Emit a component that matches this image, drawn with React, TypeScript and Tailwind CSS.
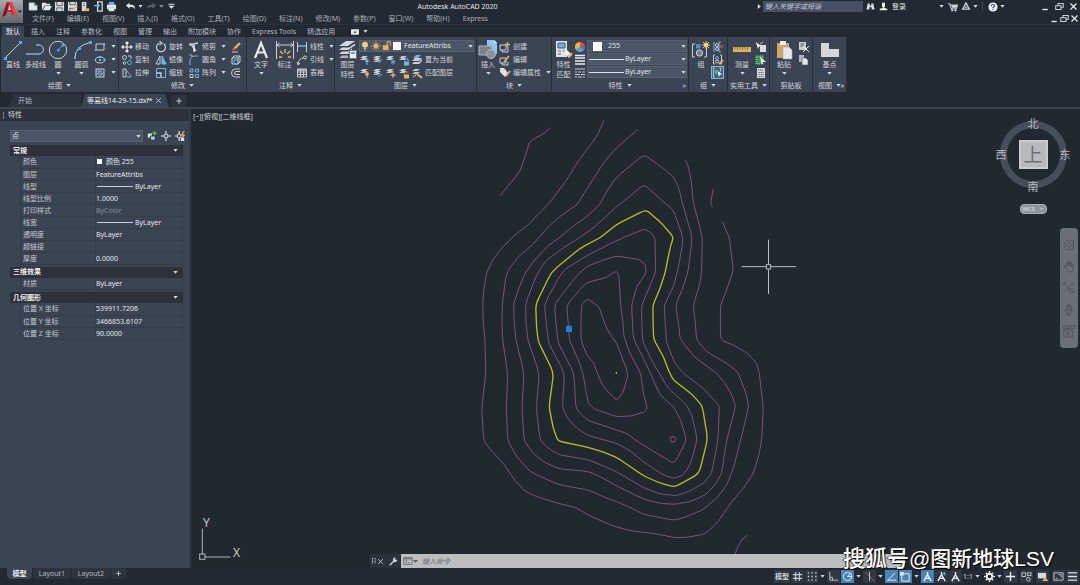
import { ReactNode } from 'react';

type Point = [number, number];

interface IconProps {
  children: ReactNode;
  className?: string;
  box?: number;
}

const Icon = ({ children, className = 'size-3', box = 12 }: IconProps) => (
  <svg
    viewBox={`0 0 ${box} ${box}`}
    className={`shrink-0 ${className}`}
    fill="none"
    stroke="#c9ced6"
    strokeWidth={1}
    aria-hidden="true"
  >
    {children}
  </svg>
);

const Caret = ({ className = '' }: { className?: string }) => (
  <svg viewBox="0 0 5 3" className={`h-[3px] w-[5px] shrink-0 ${className}`} aria-hidden="true">
    <path d="M0.3 0H4.7L2.5 2.8Z" fill="#d3d7dd" />
  </svg>
);

/* ---------- shared drawings ---------- */

const BLUE = '#6fb7e8';
const GOLD = '#e8b45a';

const Sheets = () => (
  <path d="M1 4L4 2H9L6 4ZM1 6L4 4H9L6 6Z" fill="#c9ced6" stroke="none" />
);

const layerIcons: ReactNode[] = [
  <><Sheets /><circle cx="8" cy="7" r="1.8" fill={BLUE} stroke="none" /><path d="M8 9V11" stroke={BLUE} /></>,
  <><Sheets /><path d="M1 8L4 6H9L6 8Z" fill="#aeb4bd" stroke="none" /><path d="M7 9L10 5" stroke={BLUE} /></>,
  <><Sheets /><path d="M8 5.5V10.5M5.5 8H10.5M6.3 6.3L9.7 9.7M9.7 6.3L6.3 9.7" stroke={BLUE} strokeWidth=".8" /></>,
  <><Sheets /><rect x="6" y="7.5" width="5" height="4" fill={BLUE} stroke="none" /><path d="M7 7.5V6A1.5 1.5 0 0 1 10 6V7.5" stroke={BLUE} /></>,
  <><path d="M2 4L5 1H10L7 4Z" fill={BLUE} stroke="none" /><path d="M1 7L4 4H11L8 7ZM1 10L3 8H8L11 5V7L8 10Z" fill="#c9ced6" stroke="none" /></>,
];

const layerIconsOn: ReactNode[] = [
  <><Sheets /><circle cx="8" cy="7" r="2" fill={GOLD} stroke="none" /><path d="M8 9V11" stroke={GOLD} /></>,
  <><Sheets /><path d="M1 8L4 6H9L6 8Z" fill="#aeb4bd" stroke="none" /><path d="M6 10L10 7" stroke={BLUE} /></>,
  <><Sheets /><circle cx="8" cy="8" r="1.5" fill={GOLD} stroke="none" /><path d="M8 5V11M5 8H11" stroke={GOLD} strokeWidth=".8" /></>,
  <><Sheets /><rect x="6" y="7.5" width="5" height="4" fill={GOLD} stroke="none" /><path d="M6 7V6A1.5 1.5 0 0 1 9 6" stroke={GOLD} /></>,
  <><path d="M1 4L4 2H9L6 4ZM1 7L4 5H9L6 7Z" fill="#c9ced6" stroke="none" /><path d="M6 7L11 11" stroke={GOLD} strokeWidth="2" /><path d="M2 10L5 8" /></>,
];

/* ---------- ribbon building blocks ---------- */

interface PanelProps {
  title: string;
  width: string;
  children: ReactNode;
  caret?: boolean;
  launcher?: boolean;
}

const Panel = ({ title, width, children, caret = true, launcher = false }: PanelProps) => (
  <section className={`flex h-[55px] shrink-0 flex-col border-r border-[#272e39] bg-[#3b4453] ${width}`}>
    <div className="flex h-[42px] pt-[3px]">{children}</div>
    <div className="relative flex h-[13px] items-center justify-center gap-1 text-[#d3d7dd]">
      <span>{title}</span>
      {caret && <Caret />}
      {launcher && <span className="absolute right-[2px] text-[7px]">»</span>}
    </div>
  </section>
);

interface BigButtonProps {
  label: string;
  label2?: string;
  width: string;
  caret?: boolean;
  children: ReactNode;
}

const BigButton = ({ label, label2, width, caret = false, children }: BigButtonProps) => (
  <button className={`flex shrink-0 flex-col items-center whitespace-nowrap leading-[10px] ${width}`}>
    <Icon box={20} className="size-5">{children}</Icon>
    <span>{label}</span>
    {label2 && <span>{label2}</span>}
    {caret && <Caret className="mt-[2px]" />}
  </button>
);

interface ToolProps {
  icon: ReactNode;
  label?: string;
  caret?: boolean;
}

const Tool = ({ icon, label, caret }: ToolProps) => (
  <button className="flex h-[13px] items-center gap-[2px] whitespace-nowrap" aria-label={label ?? 'tool'}>
    <Icon>{icon}</Icon>
    {label && <span>{label}</span>}
    {caret && <Caret className="ml-[3px]" />}
  </button>
);

const ToolColumn = ({ tools, width = '' }: { tools: ToolProps[]; width?: string }) => (
  <div className={`flex shrink-0 flex-col ${width}`}>
    {tools.map((tool, i) => (
      <Tool key={i} {...tool} />
    ))}
  </div>
);

const LineCombo = ({ label }: { label: string }) => (
  <div className="relative h-3">
    <select
      aria-label={label}
      className="h-3 w-[100px] appearance-none border border-[#566172] bg-[#4a5565] pl-[37px] leading-[10px] text-[#e3e6ea]"
    >
      <option>ByLayer</option>
    </select>
    <span className="pointer-events-none absolute left-[2px] top-[6px] h-px w-[35px] bg-[#dfe3e8]" />
    <Caret className="pointer-events-none absolute right-[1px] top-[5px]" />
  </div>
);

/* ---------- title and menus ---------- */

const menus = [
  '文件(F)', '编辑(E)', '视图(V)', '插入(I)', '格式(O)', '工具(T)', '绘图(D)',
  '标注(N)', '修改(M)', '参数(P)', '窗口(W)', '帮助(H)', 'Express',
];

const ribbonTabs = [
  '默认', '插入', '注释', '参数化', '视图', '管理', '输出', '附加模块', '协作', 'Express Tools', '精选应用',
];

const quickIcons: [string, ReactNode][] = [
  ['新建', <path d="M1 2H7L10 5V10H1ZM7 2V5H10" fill="#e6e8eb" stroke="#a9afb9" strokeWidth=".6" />],
  ['打开', <path d="M1 10V2H5L6 3H10V5H4ZM2 10L4.5 5.5H12L9.5 10Z" fill="#e6e8eb" stroke="none" />],
  ['保存', <><path d="M1 1H11V11H1Z" fill="#d7dade" stroke="none" /><path d="M3 1V5H9V1M3 11V7.5H9V11" stroke="#555d69" /></>],
  ['另存为', <><path d="M1 1H11V11H1Z" fill="#d7dade" stroke="none" /><path d="M3 1V4H9V1M3 11V8H7" stroke="#555d69" /><path d="M6 10L11 5" stroke={GOLD} strokeWidth="2" /></>],
  ['从移动设备打开', <><path d="M2 1H7V11H2Z" fill="#d7dade" stroke="none" /><path d="M3.5 3H5.5M3.5 5H5.5" stroke="#555d69" /><path d="M5 8H10V11H5Z" fill={GOLD} stroke="none" /></>],
  ['保存到移动设备', <><path d="M5 1H10V11H5Z" stroke="#d7dade" strokeWidth="1.4" /><path d="M1 5H7M5 3L7 5L5 7" stroke={BLUE} strokeWidth="1.4" /></>],
  ['打印', <><path d="M3 1H9V4H3Z" fill={BLUE} stroke="none" /><path d="M1 4H11V9H1Z" fill="#e6e8eb" stroke="none" /><path d="M3 7.5H9V11H3Z" fill="#fff" stroke="#68a4cc" strokeWidth=".6" /></>],
];

const Restore = () => (
  <Icon className="size-[9px]"><path d="M1 5H8V10H1ZM4 5V2H11V7H8" strokeWidth="1.4" /></Icon>
);
const Close = () => (
  <Icon className="size-[9px]"><path d="M2 2L10 10M10 2L2 10" stroke="#eceef1" strokeWidth="1.6" /></Icon>
);
const Minimize = () => (
  <Icon className="size-[9px]"><path d="M2 10H9" stroke="#eceef1" strokeWidth="1.8" /></Icon>
);

const Header = () => (
  <header className="flex h-[25px] border-b border-[#2b323d]">
    <button aria-label="应用程序菜单" className="flex h-[23px] w-[23px] shrink-0 items-center bg-gradient-to-b from-[#a6a9ae] to-[#62666d]">
      <svg viewBox="0 0 23 23" className="size-[23px]" aria-hidden="true">
        <path d="M2 17L7 2H12L17 16L12 15L11 12H7L6 15Z" fill="#c5282c" />
        <path d="M2 17L7 2L8 7L6 15Z" fill="#8e1418" />
        <path d="M8 10L9.5 5L11 10Z" fill="#dcdcdc" />
        <path d="M7 2H12L17 16L14 15L10 3Z" fill="#e3494b" />
        <path d="M17.500 10.500H22L19.750 13Z" fill="#252b34" />
      </svg>
    </button>
    <div className="flex min-w-0 flex-1 flex-col">
      <div className="flex h-[13px] items-center justify-between pt-px">
        <div className="flex items-center">
          <div className="flex items-center gap-[2px] pl-[5px]">
            {quickIcons.map(([name, icon]) => (
              <button key={name} aria-label={name}><Icon className="size-[11px]">{icon}</Icon></button>
            ))}
          </div>
          <button aria-label="放弃" className="ml-2"><Icon className="size-[11px]"><path d="M1 5L5 2V4H7Q11 4 11 9Q9 6 7 6.500H5V8.500Z" fill="#dfe2e6" stroke="none" /></Icon></button>
          <Caret className="ml-[2px]" />
          <button aria-label="重做" className="ml-[3px]"><Icon className="size-[11px]"><path d="M11 5L7 2V4H5Q1 4 1 9Q3 6 5 6.500H7V8.500Z" fill="#545d6b" stroke="none" /></Icon></button>
          <Caret className="ml-[2px] opacity-60" />
          <Icon className="ml-[3px] size-[9px]"><path d="M2 3H10" strokeWidth="1.500" /><path d="M2 5H10L6 9Z" fill="#dfe2e6" stroke="none" /></Icon>
        </div>
        <h1 className="whitespace-nowrap text-[#e3e6ea]">Autodesk AutoCAD 2020</h1>
        <div className="flex items-center pl-[18px]">
          <Icon className="mr-px size-[5px]"><path d="M2 0L9 6L2 12Z" fill="#dfe2e6" stroke="none" /></Icon>
          <input
            aria-label="搜索"
            placeholder="键入关键字或短语"
            className="h-[11px] w-[100px] bg-[#465062] pl-[2px] italic leading-[11px] placeholder:text-[#c3c8d0]"
          />
          <Icon className="ml-[3px] size-[9px]"><path d="M2 2H5V5H7V2H10V4L11.500 10H7.500V7H4.500V10H.5L2 4Z" fill="#dfe2e6" stroke="none" /></Icon>
          <Icon className="ml-[4px] size-[9px]"><path d="M4 1H8V6L7 7V8L11 9V11H1V9L5 8V7L4 6Z" fill="#f0f1f3" stroke="none" /></Icon>
          <button className="ml-[4px] whitespace-nowrap text-[#e3e6ea]">登录</button>
          <Caret className="ml-[33px]" />
          <Icon className="ml-[4px] size-[10px]"><path d="M0 2H2L4 8H10L11.500 3.500H3" strokeWidth="1.300" /><path d="M4 4H11L10 7H5Z" fill="#dfe2e6" stroke="none" /><circle cx="5" cy="10" r="1" fill="#dfe2e6" /><circle cx="9" cy="10" r="1" fill="#dfe2e6" /></Icon>
          <Icon className="ml-[3px] size-[10px]"><path d="M6 1L10 8.500H2ZM1 8.500H4M8 8.500H11M4.500 6H7.500" strokeWidth="1.500" /></Icon>
          <Caret className="ml-[2px]" />
          <span className="ml-[4px] h-[9px] w-px bg-[#424a57]" />
          <Icon className="ml-[5px] size-[10px]"><circle cx="6" cy="6" r="5.500" fill="#f0f1f3" stroke="none" /><path d="M4 5Q4 3 6 3Q8 3 8 4.500Q8 5.500 6 6.500V7.500M6 8.500V9.500" stroke="#2b4a73" strokeWidth="1.300" /></Icon>
          <Caret className="ml-[2px]" />
          <div className="ml-[36px] mr-[2px] flex gap-[5px]">
            <button aria-label="最小化"><Minimize /></button>
            <button aria-label="还原"><Restore /></button>
            <button aria-label="关闭"><Close /></button>
          </div>
        </div>
      </div>
      <nav className="flex h-[12px] items-center gap-[13px] whitespace-nowrap pl-[9px] pt-px text-[#a9afb9]">
        {menus.map((menu) => (
          <button key={menu}>{menu}</button>
        ))}
        <div className="ml-auto flex gap-px pr-px">
          <button aria-label="最小化图形"><Minimize /></button>
          <button aria-label="还原图形"><Restore /></button>
          <button aria-label="关闭图形"><Close /></button>
        </div>
      </nav>
    </div>
  </header>
);

const RibbonTabs = () => (
  <nav className="flex h-[12px] items-center gap-[11px] whitespace-nowrap pl-[6px] pt-px text-[#b4bac3]">
    {ribbonTabs.map((tab, i) => (
      <button key={tab} className={i === 0 ? '-mx-1 h-full bg-[#3b4453] px-1 text-[#eceef1]' : ''}>
        {tab}
      </button>
    ))}
    <button aria-label="显示" className="ml-[5px] flex items-center gap-1">
      <Icon className="size-2"><rect x="0" y="2" width="12" height="8" rx="1" fill="#e3e6ea" stroke="none" /><path d="M4 7L6 4.500L8 7Z" fill="#222933" stroke="none" /></Icon>
      <Caret />
    </button>
  </nav>
);

/* ---------- ribbon ---------- */

const Ribbon = () => (
  <div className="flex h-[55px] overflow-hidden pl-px text-[#d3d7dd]">
    <Panel title="绘图" width="w-[118px]">
      <span className="w-px" />
      <BigButton label="直线" width="w-[22px]">
        <path d="M2 18L18 2" /><path d="M1 17H4V20H1ZM16 1H19V4H16Z" fill="#5aa7e0" stroke="none" />
      </BigButton>
      <BigButton label="多段线" width="w-[23px]">
        <path d="M1 14H13A4.500 4.500 0 0 0 13 5H10" /><path d="M0 13H2V15H0ZM11 13H13V15H11ZM11 4H13V6H11Z" fill="#5aa7e0" stroke="none" />
      </BigButton>
      <BigButton label="圆" width="w-[22px]" caret>
        <circle cx="10" cy="10" r="8.700" /><path d="M10 10L14.500 5.500" stroke="#5aa7e0" /><path d="M9 9H11.500V11.500H9ZM13.500 4H16V6.500H13.500Z" fill="#5aa7e0" stroke="none" />
      </BigButton>
      <BigButton label="圆弧" width="w-[25px]" caret>
        <path d="M3 18Q3 6 18 2.500" /><path d="M2 16H4V19H2ZM6 7H9V10H6ZM17 1H20V4H17Z" fill="#5aa7e0" stroke="none" />
      </BigButton>
      <ToolColumn
        tools={[
          { icon: <><path d="M2 3H10V9H2Z" /><path d="M1 8H3V10H1ZM9 2H11V4H9Z" fill={BLUE} stroke="none" /></>, caret: true },
          { icon: <><ellipse cx="6" cy="6" rx="4.500" ry="3" /><path d="M5 5H7V7H5ZM9.500 5H11.500V7H9.500ZM5 2H7V4H5Z" fill={BLUE} stroke="none" /></>, caret: true },
          { icon: <><rect x="2" y="2" width="8" height="8" /><path d="M4 4H8V8H4Z" fill={BLUE} fillOpacity=".5" stroke={BLUE} strokeWidth=".6" /><path d="M2 5L5 2M5 10L10 5M8 10L10 8M2 8L8 2" strokeWidth=".6" /></>, caret: true },
        ]}
      />
    </Panel>

    <Panel title="修改" width="w-[128px]">
      <span className="w-[2px]" />
      <ToolColumn
        width="w-[34px]"
        tools={[
          { icon: <path d="M6 1V11M1 6H11M4.500 2.500L6 1L7.500 2.500M4.500 9.500L6 11L7.500 9.500M2.500 4.500L1 6L2.500 7.500M9.500 4.500L11 6L9.500 7.500" stroke="#eceef1" strokeWidth="1.200" />, label: '移动' },
          { icon: <><circle cx="3.500" cy="3.500" r="2" /><circle cx="8.500" cy="8.500" r="2" stroke={BLUE} /><circle cx="3.500" cy="9" r="1.300" /><path d="M7 2H10V5" /></>, label: '复制' },
          { icon: <><path d="M2 2H5V10H2Z" /><path d="M5 3L10 9V10H6" stroke={BLUE} /></>, label: '拉伸' },
        ]}
      />
      <ToolColumn
        width="w-[33px]"
        tools={[
          { icon: <path d="M8.500 2.500A4.500 4.500 0 1 1 4.500 2M4.500 0L7 2.200L4.500 4" strokeWidth="1.200" />, label: '旋转' },
          { icon: <><path d="M5 2V10H1Z" /><path d="M7 2V10H11Z" fill={BLUE} stroke={BLUE} /></>, label: '镜像' },
          { icon: <><path d="M1.500 1.500H10.500V10.500H1.500Z" stroke={BLUE} /><path d="M1.500 6H6V10.500" strokeWidth="1.400" /></>, label: '缩放' },
        ]}
      />
      <ToolColumn
        width="w-[42px]"
        tools={[
          { icon: <><path d="M2 2L8 10M1 4L10 2" strokeWidth="1.500" /><path d="M6 4V11" stroke="#eceef1" strokeWidth="1.500" /></>, label: '修剪', caret: true },
          { icon: <><path d="M2 11V7Q2 2 7 2H10" stroke={BLUE} /><path d="M1 1H4V3" strokeWidth=".7" /></>, label: '圆角', caret: true },
          { icon: <><path d="M2 2H5V5H2ZM7.500 2H10.500V5H7.500ZM7.500 7.500H10.500V10.500H7.500Z" stroke={BLUE} /><path d="M2 7.500H5V10.500H2Z" /></>, label: '阵列', caret: true },
        ]}
      />
      <ToolColumn
        tools={[
          { icon: <><path d="M4 8L10 2" stroke={GOLD} strokeWidth="2.400" /><path d="M3 9L5 7" stroke="#e05a4a" strokeWidth="2.400" /><path d="M2 11H8" /></> },
          { icon: <><path d="M2 4H8V10H2ZM2 4L4 2H10V8L8 10M8 4L10 2" /><path d="M4 6H8V10H4Z" stroke={BLUE} /></> },
          { icon: <path d="M10 2H5.500A4 4 0 0 0 5.500 10H10M10 4.500H6A1.500 1.500 0 0 0 6 7.500H10" /> },
        ]}
      />
    </Panel>

    <Panel title="注释" width="w-[88px]">
      <span className="w-[2px]" />
      <BigButton label="文字" width="w-[24px]" caret>
        <path d="M4 18L10 3L16 18M6 12.500H14" stroke="#e6e8eb" strokeWidth="2.200" />
      </BigButton>
      <BigButton label="标注" width="w-[23px]">
        <path d="M1.500 1V19M18.500 1V19M2 5H18M4.500 3L2 5L4.500 7M15.500 3L18 5L15.500 7" />
        <path d="M10 9V13M5 11L8 14M15 11L12 14M4 17H7M13 17H16" stroke={GOLD} strokeWidth="1.400" />
      </BigButton>
      <ToolColumn
        tools={[
          { icon: <><path d="M1.500 1V11M10.500 1V11" /><path d="M2 5H10" stroke={BLUE} strokeWidth="1.500" /></>, label: '线性', caret: true },
          { icon: <><path d="M2 10Q3 4 7.500 4" /><circle cx="9" cy="3.500" r="1.500" /><path d="M1 8L2 11L4 9" /></>, label: '引线', caret: true },
          { icon: <><path d="M1.500 2H10.500V10H1.500ZM1.500 5H10.500M1.500 7.500H10.500M4.500 4V10M7.500 4V10" /><path d="M1.500 3H10.500" strokeWidth="1.500" /></>, label: '表格' },
        ]}
      />
    </Panel>

    <Panel title="图层" width="w-[142px]">
      <span className="w-px" />
      <BigButton label="图层" label2="特性" width="w-[23px]">
        <path d="M1 6L8 1H17L10 6ZM1 10L4 7.500H11L17 3.500V5.500L10 10ZM1 14L4 11.500H10L14 8.500V11L10 14Z" fill="#d3d7dd" stroke="none" />
        <path d="M1 18L4 15.500H10V18Z" fill="#aeb4bd" stroke="none" />
        <rect x="11.500" y="10.500" width="7" height="8" fill="#eceef1" stroke="#697586" /><path d="M13 13H17" stroke="#4fa4e4" strokeWidth="2" />
      </BigButton>
      <div className="flex flex-col">
        <div className="relative h-[13px]">
          <select
            aria-label="图层"
            className="h-3 w-[115px] appearance-none border border-[#566172] bg-[#4a5565] pl-[44px] leading-[10px] text-[#e3e6ea]"
          >
            <option>FeatureAttribs</option>
          </select>
          <div className="pointer-events-none absolute left-[1px] top-[1px] flex gap-px">
            <Icon className="size-[10px]"><circle cx="6" cy="4.500" r="3.500" fill="#f0cf84" stroke="none" /><path d="M4.500 9H7.500M5 11H7" stroke="#e6d7b0" /></Icon>
            <Icon className="size-[10px]"><circle cx="6" cy="6" r="3" fill={GOLD} stroke="none" /><path d="M6 0V12M0 6H12M2 2L10 10M10 2L2 10" stroke={GOLD} strokeWidth=".8" /></Icon>
            <Icon className="size-[10px]"><path d="M1 5H8V11H1Z" fill={GOLD} stroke="none" /><path d="M6 5V2.500A2 2 0 0 1 10 2.500V5" stroke={GOLD} strokeWidth="1.300" /></Icon>
            <span className="mt-px size-2 bg-white" />
          </div>
          <Caret className="pointer-events-none absolute right-[1px] top-[5px]" />
        </div>
        <div className="flex h-[13px] items-center gap-px whitespace-nowrap">
          {layerIcons.map((icon, i) => <Icon key={i}>{icon}</Icon>)}
          <button className="ml-px">置为当前</button>
        </div>
        <div className="flex h-[13px] items-center gap-px whitespace-nowrap">
          {layerIconsOn.map((icon, i) => <Icon key={i}>{icon}</Icon>)}
          <button className="ml-px">匹配图层</button>
        </div>
      </div>
    </Panel>

    <Panel title="块" width="w-[75px]">
      <span className="w-px" />
      <BigButton label="插入" width="w-[22px]" caret>
        <path d="M9 0H16L19 3V14H9Z" fill="#8cc4ee" stroke="none" /><path d="M16 0V3H19Z" fill="#d4e8f7" stroke="none" />
        <path d="M1 6H14V15H1Z" fill="#7b828d" stroke="#b5bac2" /><circle cx="13" cy="14" r="4.500" fill="#8a919b" stroke="#b5bac2" />
      </BigButton>
      <ToolColumn
        tools={[
          { icon: <><path d="M1 4H7V9H1ZM3 9V11H9V6" /><path d="M8.500 1V6M6 3.500H11" stroke={GOLD} strokeWidth="1.400" /></>, label: '创建' },
          { icon: <><path d="M1 4H7V9H1ZM3 9V11H9V8" /><path d="M5 8L10 2" stroke={GOLD} strokeWidth="1.800" /></>, label: '编辑' },
          { icon: <><path d="M1 1H5L9 6L6 10L1 5Z" fill="#dfe2e6" stroke="none" /><path d="M7 9L11 4" stroke={GOLD} strokeWidth="1.800" /></>, label: '编辑属性', caret: true },
        ]}
      />
    </Panel>

    <Panel title="特性" width="w-[137px]" launcher>
      <span className="w-px" />
      <BigButton label="特性" label2="匹配" width="w-[21px]">
        <path d="M2 1H13V17H2Z" fill="#dfe2e6" stroke="none" /><path d="M4 3H11V8H4Z" fill="#62aee6" stroke="#4d5766" />
        <path d="M4 11H7M4 14H7M9 11H11" stroke="#5c6675" /><path d="M10 11L13 10L18 15L15 18Z" fill="#f4f5f6" stroke="none" /><path d="M14 17L18 13" stroke={GOLD} strokeWidth="2" />
      </BigButton>
      <ToolColumn
        width="w-[13px]"
        tools={[
          { icon: <><circle cx="6" cy="6" r="5" fill="#e0503f" stroke="none" /><path d="M6 6V1A5 5 0 0 0 1.700 8.500Z" fill="#e9b53a" stroke="none" /><path d="M6 6L1.700 8.500A5 5 0 0 0 10.300 8.500Z" fill="#4aa8d8" stroke="none" /><path d="M6 6L10.300 8.500A5 5 0 0 0 10.500 4Z" fill="#6b62b8" stroke="none" /></> },
          { icon: <path d="M1 1.500H11M1 4H11M1 7H11M1 10H11" stroke="#eceef1" strokeWidth="1.600" /> },
          { icon: <path d="M1 2H11M1 5H3M4 5H7M8 5H11M1 7.500H6M7 7.500H11M1 10H3M4 10H8M9 10H11" /> },
        ]}
      />
      <div className="flex flex-col gap-px">
        <div className="relative h-3">
          <select
            aria-label="对象颜色"
            className="h-3 w-[100px] appearance-none border border-[#566172] bg-[#4a5565] pl-[20px] leading-[10px] text-[#e3e6ea]"
          >
            <option>255</option>
          </select>
          <span className="pointer-events-none absolute left-[6px] top-[2px] size-[9px] bg-white" />
          <Caret className="pointer-events-none absolute right-[1px] top-[5px]" />
        </div>
        <LineCombo label="线宽" />
        <LineCombo label="线型" />
      </div>
    </Panel>

    <Panel title="组" width="w-[39px]">
      <span className="w-px" />
      <BigButton label="组" width="w-[22px]">
        <path d="M4 4H1.500V17H4M13 4H15.500V17H13" /><rect x="5" y="4" width="4.500" height="4.500" fill="#4f91c5" stroke="none" /><circle cx="8.500" cy="13" r="3.200" fill="#7b828d" />
        <path d="M15 1V9M11 5H19M12 2L18 8M18 2L12 8" stroke="#f0cf84" strokeWidth=".9" /><circle cx="15" cy="5" r="2.300" fill="#f3cf7a" stroke="none" />
      </BigButton>
      <div className="flex flex-col">
        <Tool icon={<><path d="M2 1V11M9 1H7V11H9" stroke={BLUE} /><circle cx="5" cy="4" r="1.500" /><circle cx="5" cy="8" r="1.500" /><path d="M8 4L11 7M11 4L8 7" stroke="#e05a5a" /></>} />
        <Tool icon={<><path d="M3 1H1.500V10H3M8 1H9.500V10H8" /><circle cx="5" cy="4" r="1.500" stroke={BLUE} /><circle cx="5" cy="7.500" r="1.500" /><path d="M7 10L11 6" stroke={GOLD} strokeWidth="1.800" /></>} />
        <button aria-label="启用组选择" className="-ml-px flex size-[13px] items-center justify-center border border-[#7db9e2] bg-[#3f6483]">
          <Icon className="size-[11px]"><path d="M3 1H1.500V11H3M8 1H9.500V5" /><path d="M3 3H6V8H3Z" fill="#4db56b" stroke="none" /><path d="M6 4L11 8L8.500 8.500L7.500 11Z" fill="#fff" stroke="none" /></Icon>
        </button>
      </div>
    </Panel>

    <Panel title="实用工具" width="w-[42px]">
      <span className="w-px" />
      <BigButton label="测量" width="w-[26px]" caret>
        <path d="M1 7H19V12H1Z" fill="#e0b062" stroke="none" /><path d="M3 7V9M5.500 7V10M8 7V9M10.500 7V10M13 7V9M15.500 7V10" stroke="#876331" strokeWidth=".8" />
      </BigButton>
      <ToolColumn
        tools={[
          { icon: <><path d="M5 4H11V11H5Z" fill="#d7dade" stroke="none" /><path d="M1 1L6 5L4 5.500L3 8Z" fill="#fff" stroke="none" /><path d="M5 3L8 1" stroke={GOLD} /></> },
          { icon: <><path d="M1 2H8V10H1Z" fill="#3a9b5d" stroke="#8ed3a5" strokeDasharray="1 1" /><path d="M5 3L11 8L8 8L7 11Z" fill="#fff" stroke="none" /></> },
          { icon: <><path d="M2 1H10V11H2Z" fill="#d7dade" stroke="none" /><path d="M3 3H9M3.500 5.500H8.500M3.500 7.500H8.500M3.500 9.500H8.500" stroke="#4b5462" strokeDasharray="1.200 .8" /></> },
        ]}
      />
    </Panel>

    <Panel title="剪贴板" width="w-[43px]" caret={false}>
      <BigButton label="粘贴" width="w-[28px]" caret>
        <path d="M3 3H15V18H3Z" fill="#d0a368" stroke="none" /><path d="M6 1H12V5H6Z" fill="#eceef1" stroke="none" />
        <path d="M9 7H15L18 10V19H9Z" fill="#e3e6ea" stroke="#a8adb5" strokeWidth=".6" />
      </BigButton>
      <ToolColumn
        tools={[
          { icon: <><path d="M1 1H8V9H1Z" fill="#c9ced6" stroke="none" /><path d="M2.500 3H6M2.500 5H6" stroke="#4b5462" /><path d="M5 5L11 11M11 5L5 11" stroke="#eceef1" /></> },
          { icon: <><path d="M1 1H6V8H1Z" fill="#aeb4bd" stroke="none" /><path d="M4 4H8L10 6V11H4Z" fill="#e3e6ea" stroke="#4b5462" strokeWidth=".6" /></> },
        ]}
      />
    </Panel>

    <Panel title="视图" width="w-[34px]" launcher>
      <BigButton label="基点" width="w-[33px]" caret>
        <path d="M1 3H9V9H19V17H1Z" fill="#d3d7dd" stroke="none" />
      </BigButton>
    </Panel>
  </div>
);

const FileTabs = () => (
  <div className="flex h-[17px] items-end border-b-2 border-[#3b4453] pl-[9px]">
    <button className="h-[13px] w-[72px] bg-[#2d3440] pl-[9px] text-left text-[#b4bac3] [clip-path:polygon(4px_0,100%_0,100%_100%,0_100%)]">
      开始
    </button>
    <div className="flex h-[13px] w-[88px] items-center justify-between bg-[#3b4453] pl-[6px] pr-[7px] text-[#eceef1] [clip-path:polygon(4px_0,84px_0,100%_100%,0_100%)]">
      <button className="whitespace-nowrap">等高线14-29-15.dxf*</button>
      <button aria-label="关闭文件"><Icon className="size-[7px]"><path d="M2 2L10 10M10 2L2 10" strokeWidth="1.500" /></Icon></button>
    </div>
    <button aria-label="新图形" className="ml-[2px] flex h-[12px] w-4 items-center justify-center rounded bg-[#2d3440]">
      <Icon className="size-2"><path d="M6 2V10M2 6H10" strokeWidth="1.500" /></Icon>
    </button>
  </div>
);

/* ---------- properties palette ---------- */

interface Property {
  name: string;
  value: string;
  swatch?: boolean;
  line?: boolean;
  dim?: boolean;
}

const groups: { title: string; rows: Property[] }[] = [
  {
    title: '常规',
    rows: [
      { name: '颜色', value: '颜色 255', swatch: true },
      { name: '图层', value: 'FeatureAttribs' },
      { name: '线型', value: 'ByLayer', line: true },
      { name: '线型比例', value: '1.0000' },
      { name: '打印样式', value: 'ByColor', dim: true },
      { name: '线宽', value: 'ByLayer', line: true },
      { name: '透明度', value: 'ByLayer' },
      { name: '超链接', value: '' },
      { name: '厚度', value: '0.0000' },
    ],
  },
  { title: '三维效果', rows: [{ name: '材质', value: 'ByLayer' }] },
  {
    title: '几何图形',
    rows: [
      { name: '位置 X 坐标', value: '539911.7206' },
      { name: '位置 Y 坐标', value: '3466853.6107' },
      { name: '位置 Z 坐标', value: '90.0000' },
    ],
  },
];

const PropertyGroup = ({ title, rows }: { title: string; rows: Property[] }) => (
  <section>
    <h3 className="flex h-[11px] items-center justify-between bg-[#2c313c] pl-[3px] pr-[5px] font-bold text-[#eceef1]">
      {title}
      <Caret />
    </h3>
    <table className="ml-[10px] w-[163px] table-fixed border-collapse">
      <tbody>
        {rows.map((row) => (
          <tr key={row.name} className="h-3 border-b border-[#343c49]">
            <th className="w-[75px] border-x border-[#343c49] p-0 pl-[2px] text-left font-normal leading-[11px] text-[#c3c8d0]">
              {row.name}
            </th>
            <td className={`border-r border-[#343c49] p-0 leading-[11px] ${row.dim ? 'text-[#858d99]' : 'text-[#e3e6ea]'}`}>
              <div className="flex items-center">
                {row.swatch && <span className="ml-px mr-1 size-[5px] bg-white" />}
                {row.line && <span className="ml-px mr-[2px] h-px w-9 bg-[#c9ced6]" />}
                {row.value}
              </div>
            </td>
          </tr>
        ))}
      </tbody>
    </table>
  </section>
);

const Palette = () => (
  <aside className="w-[191px] shrink-0 border-r-2 border-[#343b48] bg-[#3b4453]">
    <h2 className="flex h-3 items-center gap-1 bg-[#2c313c] pl-[3px] text-[#d3d7dd]">
      <span className="h-[7px] w-px bg-[#757d89]" />
      特性
    </h2>
    <div className="flex items-center pl-[10px] pt-[9px]">
      <div className="relative h-3">
        <select
          aria-label="选定对象"
          className="h-3 w-[133px] appearance-none border border-[#566172] bg-[#4a5565] pl-px leading-[10px] text-[#e3e6ea]"
        >
          <option>点</option>
        </select>
        <Caret className="pointer-events-none absolute right-[2px] top-[5px]" />
      </div>
      <div className="flex gap-[4px] pl-[4px]">
        <button aria-label="切换 PICKADD"><Icon className="size-[10px]"><path d="M1 3H6V8H1Z" fill="#dfe2e6" stroke="none" /><path d="M4 6H10V11H4Z" fill="#9fcdf0" stroke="#20262e" /><path d="M9 0V5M6.500 2.500H11.500" stroke="#5fbf5a" strokeWidth="1.500" /></Icon></button>
        <button aria-label="选择对象"><Icon className="size-[10px]"><path d="M6 0V4M6 8V12M0 6H4M8 6H12" stroke="#eceef1" strokeWidth="1.300" /><rect x="4" y="4" width="4" height="4" /></Icon></button>
        <button aria-label="快速选择"><Icon className="size-[10px]"><path d="M5 0V4M5 8V12M0 6H3" stroke="#eceef1" strokeWidth="1.300" /><rect x="3" y="4" width="4" height="4" /><path d="M11 0L8 5H11L8 9" stroke={GOLD} strokeWidth="1.500" /><path d="M7 8H11V12H7Z" fill="#dfe2e6" stroke="none" /></Icon></button>
      </div>
    </div>
    <div className="ml-[10px] mt-[3px] flex w-[173px] flex-col gap-[2px]">
      {groups.map((group) => (
        <PropertyGroup key={group.title} {...group} />
      ))}
    </div>
  </aside>
);

/* ---------- drawing ---------- */

const openContours: Point[][] = [
  [[90, 257], [150, 184], [170, 125], [178, 98], [190, 88], [222, 70], [240, 54]],
  [
    [402, 31], [380, 80], [323, 156], [290, 210], [234, 284], [205, 312], [178, 342], [140, 370], [95, 415], [68, 450],
    [50, 488], [42, 535], [38, 585], [40, 640], [45, 690], [47, 795], [35, 895], [41, 992], [65, 1023], [100, 1060],
    [130, 1105], [163, 1142], [200, 1160], [265, 1180], [318, 1193], [360, 1218], [430, 1248], [480, 1262], [555, 1271],
    [615, 1283], [650, 1282], [705, 1272], [745, 1235], [780, 1182], [820, 1135], [850, 1090], [868, 1030], [875, 988],
    [880, 895], [868, 790], [860, 760], [830, 728], [795, 708], [752, 689], [751, 630], [752, 585], [770, 540],
    [790, 480], [785, 440], [778, 382], [757, 335],
  ],
  [
    [504, 58], [438, 115], [400, 160], [360, 222], [322, 283], [280, 312], [240, 345], [187, 405], [145, 440],
    [115, 480], [107, 505], [97, 580], [96, 640], [98, 690], [113, 790], [109, 895], [113, 992], [140, 1040],
    [182, 1086], [265, 1124], [355, 1140], [400, 1160], [440, 1175], [480, 1192], [520, 1213], [612, 1231],
    [650, 1220], [700, 1198], [740, 1165], [770, 1125], [790, 1075], [812, 990], [836, 890], [828, 850], [803, 785],
    [770, 760], [710, 725], [680, 690], [675, 630], [670, 585], [690, 520], [695, 480], [697, 385], [688, 345],
    [670, 280], [664, 215], [655, 170], [646, 150],
  ],
  [[729, 238], [722, 280], [728, 292]],
  [[832, 1275], [815, 1290], [802, 1314], [794, 1335]],
];

const closedContours: Point[][] = [
  [
    [522, 133], [437, 204], [410, 245], [388, 285], [350, 320], [308, 350], [265, 385], [228, 413], [190, 455],
    [165, 490], [145, 540], [131, 582], [132, 630], [138, 690], [162, 790], [156, 895], [162, 992], [190, 1030],
    [220, 1055], [265, 1076], [358, 1085], [400, 1105], [440, 1128], [520, 1167], [565, 1179], [612, 1183],
    [660, 1175], [705, 1155], [735, 1125], [755, 1090], [770, 990], [797, 888], [785, 855], [765, 820], [740, 790],
    [710, 768], [670, 738], [630, 685], [627, 650], [617, 585], [640, 530], [655, 480], [667, 382], [640, 290],
    [625, 230], [610, 200], [575, 172],
  ],
  [
    [522, 223], [475, 262], [437, 292], [375, 350], [325, 385], [270, 420], [225, 455], [200, 495], [167, 580],
    [168, 640], [174, 692], [208, 790], [199, 895], [210, 990], [235, 1015], [270, 1035], [355, 1049], [440, 1085],
    [520, 1133], [570, 1152], [618, 1157], [655, 1145], [700, 1120], [725, 1090], [744, 990], [748, 888], [740, 880],
    [700, 835], [640, 790], [615, 760], [590, 700], [585, 630], [583, 585], [610, 530], [625, 475], [640, 385],
    [610, 300], [572, 268],
  ],
  [
    [522, 357], [437, 393], [345, 440], [285, 478], [265, 505], [223, 583], [231, 660], [236, 700], [284, 790],
    [277, 890], [290, 920], [320, 955], [355, 977], [440, 1000], [480, 1022], [520, 1055], [580, 1095], [612, 1105],
    [640, 1095], [662, 1060], [682, 987], [665, 915], [650, 885], [595, 835], [550, 760], [518, 695], [515, 630],
    [515, 585], [545, 515], [557, 485], [555, 385], [543, 368],
  ],
  [
    [440, 438], [400, 450], [350, 470], [322, 495], [253, 583], [260, 660], [265, 700], [312, 790], [317, 890],
    [330, 910], [355, 932], [470, 970], [500, 993], [560, 1030], [613, 1061], [650, 990], [632, 930], [612, 892],
    [570, 855], [530, 765], [490, 685], [487, 630], [485, 585], [500, 530], [528, 490], [525, 462], [505, 448],
  ],
  [
    [440, 484], [430, 488], [408, 503], [348, 518], [290, 585], [296, 655], [298, 690], [325, 750], [340, 795],
    [348, 845], [355, 880], [375, 898], [440, 920], [485, 918], [525, 905], [532, 892], [520, 850], [512, 790],
    [480, 730], [462, 680], [458, 630], [452, 585], [447, 500],
  ],
  [
    [353, 567], [335, 583], [333, 630], [333, 690], [350, 735], [372, 760], [382, 790], [400, 830], [440, 872],
    [460, 845], [475, 792], [440, 700], [415, 665], [400, 630], [387, 590],
  ],
];

const indexContour: Point[] = [
  [522, 302], [440, 343], [392, 382], [330, 415], [245, 485], [197, 583], [200, 655], [205, 695], [251, 788],
  [237, 890], [250, 955], [264, 993], [355, 1012], [400, 1026], [440, 1042], [520, 1097], [565, 1117], [614, 1131],
  [687, 1091], [713, 987], [697, 888], [665, 852], [610, 810], [595, 780], [580, 740], [551, 688], [549, 630],
  [549, 585], [570, 535], [585, 490], [600, 415], [610, 381], [575, 340], [535, 305],
];

// straight runs with every vertex slightly rounded off
const toPath = (points: Point[], closed: boolean) => {
  const n = points.length;
  const toward = (a: Point, b: Point) => `${a[0] + (b[0] - a[0]) * 0.2} ${a[1] + (b[1] - a[1]) * 0.2}`;
  const bends = points.map((p, i) => {
    if (!closed && (i === 0 || i === n - 1)) return `L${p[0]} ${p[1]}`;
    const prev = points[(i - 1 + n) % n];
    const next = points[(i + 1) % n];
    return `L${toward(p, prev)}Q${p[0]} ${p[1]} ${toward(p, next)}`;
  });
  return `M${bends.join('').slice(1)}${closed ? 'Z' : ''}`;
};

const Contours = () => (
  <svg viewBox="-837 -3 2667 1377" className="absolute inset-0 size-full" fill="none" stroke="#7d5476" strokeWidth="3" aria-label="等高线">
    {openContours.map((points, i) => <path key={i} d={toPath(points, false)} />)}
    {closedContours.map((points, i) => <path key={i} d={toPath(points, true)} />)}
    <path d={toPath(indexContour, true)} stroke="#b9be1e" strokeWidth="4" />
    <circle cx="609" cy="988" r="8" />
    <rect x="437" y="786" width="4" height="5" fill="#e0c84a" stroke="none" />
    <rect x="288" y="647" width="18" height="19" fill="#1f7fdc" stroke="none" />
    <g stroke="#b9bec5">
      <path d="M815 470H888M903 470H978M895.500 389V462M895.500 478V552" />
      <rect x="889" y="464" width="13" height="13" />
    </g>
    <g stroke="#aeb4bb">
      <path d="M-803 1256V1334M-797 1341H-719" />
      <rect x="-811" y="1332" width="16" height="16" />
    </g>
    <g fill="#c3c8ce" stroke="none" fontFamily="Noto Sans, sans-serif" fontSize="36">
      <text x="-801" y="1252">Y</text>
      <text x="-711" y="1342">X</text>
    </g>
  </svg>
);

const ViewCube = () => (
  <div className="absolute right-[8px] top-[8px] flex w-[78px] flex-col items-center text-[11px] leading-[12px] text-[#b5bac1]">
    <div className="relative flex size-[75px] items-center justify-center">
      <div className="size-[67px] rounded-full border-[7px] border-[#474e59]" />
      <div className="absolute flex size-[29px] items-center justify-center border-2 border-[#c9cbcd] bg-[#b7babd] text-[19px] text-[#6b7076]">上</div>
      <span className="absolute top-[1px]">北</span>
      <span className="absolute bottom-[-1px]">南</span>
      <span className="absolute left-0 top-[32px]">西</span>
      <span className="absolute right-0 top-[32px]">东</span>
    </div>
    <button className="mt-[12px] flex h-[10px] w-[27px] items-center justify-between rounded-sm border border-[#a8adb3] bg-[#8f959d] px-[2px] text-[6px] leading-[8px] text-[#e6e8eb]">
      WCS
      <Caret className="opacity-50" />
    </button>
  </div>
);

const NavBar = () => (
  <div className="absolute right-[2px] top-[119px] flex h-[120px] w-[18px] flex-col items-center justify-between rounded-sm bg-[#6b6f76] pb-[10px] pt-[10px]">
    {[
      <><circle cx="8" cy="8" r="5.500" /><circle cx="8" cy="8" r="2.500" /><path d="M13 3V13" /></>,
      <path d="M4 9L2 7L3 6L5 8V3H7V7V2H9V7V3H11V8V5H13V10Q13 14 9 14Q6 14 4 9Z" />,
      <><path d="M2 2L13 13M13 2L2 13M2 5V2H5M13 2V5" /><circle cx="11" cy="11" r="3" /></>,
      <><path d="M8 1V15M2 9Q8 5 14 9M5 5L8 2L11 5" /><ellipse cx="8" cy="8" rx="3" ry="6" /></>,
      <path d="M1 2H15V5H1ZM2 7H12V15H2ZM6 9V13L9 11ZM6 2V5M10 2V5" />,
    ].map((icon, i) => (
      <button key={i} aria-label="导航" className="opacity-60">
        <svg viewBox="0 0 16 16" className="size-[14px]" fill="none" stroke="#3c4047" strokeWidth="1">{icon}</svg>
      </button>
    ))}
  </div>
);

const CommandLine = () => (
  <div className="absolute bottom-0 left-[179px] right-[175px] flex h-[14px] items-center bg-[#2b323d]">
    <Icon className="ml-[1px] size-[6px]"><path d="M3 0V12M8 0V12" strokeDasharray="2 1" strokeWidth="2" /></Icon>
    <button aria-label="关闭命令行"><Icon className="size-[7px]"><path d="M2 2L10 10M10 2L2 10" strokeWidth="1.500" /></Icon></button>
    <button aria-label="自定义" className="ml-[5px]"><Icon className="size-[9px]"><path d="M1 11L7 5" strokeWidth="2" /><path d="M6 6A3 3 0 0 1 9 1L8 3L9 4L11 3A3 3 0 0 1 6 6Z" fill="#c9ced6" stroke="none" /></Icon></button>
    <div className="ml-auto flex h-full w-[calc(100%-31px)] items-center bg-[#bcbdbe] pl-[2px]">
      <Icon className="size-[10px]"><path d="M1 2H11V10H1ZM1 3.500H11M3 5L5 6.500L3 8M6 8H8" stroke="#5a5f66" /></Icon>
      <svg viewBox="0 0 5 3" className="h-[3px] w-[5px]" aria-hidden="true"><path d="M0 0H5L2.500 3Z" fill="#5a5f66" /></svg>
      <input aria-label="命令" placeholder="键入命令" className="ml-1 h-full flex-1 bg-transparent italic placeholder:text-[#6b6f75]" />
    </div>
  </div>
);

/* ---------- status bar ---------- */

const StatusButton = ({ children, on = false, name }: { children: ReactNode; on?: boolean; name: string }) => (
  <button aria-label={name} className={`flex h-[13px] w-[13px] items-center justify-center ${on ? 'bg-[#4b83b5]' : 'bg-[#303844]'}`}>
    <Icon className="size-[11px]">{children}</Icon>
  </button>
);

const Figure = () => <path d="M6 1V5M6 4L2 11M6 4L10 11M4 8H8" stroke="#eceef1" strokeWidth="1.500" />;

const StatusBar = () => (
  <footer className="flex h-[17px] items-start justify-between">
    <div className="flex items-center gap-px pl-[7px] text-[#b4bac3]">
      <button className="h-[11px] w-[25px] rounded-b bg-[#3b4453] font-bold text-[#eceef1]">模型</button>
      <button className="h-[11px] w-[38px] rounded-b bg-[#2d3440]">Layout1</button>
      <button className="h-[11px] w-[38px] rounded-b bg-[#2d3440]">Layout2</button>
      <button aria-label="新建布局" className="flex h-[11px] w-[15px] items-center justify-center rounded-b bg-[#2d3440]">
        <Icon className="size-[7px]"><path d="M6 2V10M2 6H10" strokeWidth="1.500" /></Icon>
      </button>
    </div>
    <div className="flex h-[13px] items-center gap-px pr-px pt-[4px] text-[#d3d7dd]">
      <button className="h-[13px] w-[16px] bg-[#303844] font-bold">模型</button>
      <StatusButton name="栅格"><path d="M4 1V11M8 1V11M1 4H11M1 8H11" strokeWidth="1.200" /></StatusButton>
      <StatusButton name="捕捉"><path d="M2 2H12M2 6H12M2 10H12" strokeDasharray="1.500 2.500" strokeWidth="1.500" /></StatusButton>
      <Caret className="mx-px" />
      <StatusButton name="正交"><path d="M2 1V10H11M2 7H5V10" /></StatusButton>
      <StatusButton name="极轴" on><circle cx="6" cy="6" r="4.500" stroke="#eceef1" /><path d="M6 6H11M6 6L10 2" stroke="#eceef1" /></StatusButton>
      <Caret className="mx-px" />
      <StatusButton name="等轴测"><path d="M1 1L11 11" stroke="#b2595e" /><path d="M6 1V11" /></StatusButton>
      <Caret className="mx-px" />
      <StatusButton name="追踪" on><path d="M1 10H11M2 10L10 2" stroke="#eceef1" /></StatusButton>
      <StatusButton name="对象捕捉" on><path d="M2 3H10V11H2Z" stroke="#eceef1" /><path d="M0 1H4V5H0Z" fill="#d4e8f7" stroke="none" /></StatusButton>
      <Caret className="mx-px" />
      <StatusButton name="注释可见性" on><Figure /></StatusButton>
      <StatusButton name="自动缩放"><Figure /><path d="M9 1V5M7 3H11" stroke={BLUE} /></StatusButton>
      <StatusButton name="注释比例"><Figure /></StatusButton>
      <button className="flex items-center gap-[2px]">1:1<Caret /></button>
      <button aria-label="切换工作空间" className="ml-[3px]"><Icon className="size-[11px]"><circle cx="6" cy="6" r="3" stroke="#eceef1" strokeWidth="2" /><path d="M6 0V2M6 10V12M0 6H2M10 6H12M2 2L3 3M9 9L10 10M10 2L9 3M3 9L2 10" stroke="#eceef1" strokeWidth="1.600" /></Icon></button>
      <Caret className="mx-px" />
      <StatusButton name="注释监视器"><path d="M6 1V11M1 6H11" stroke="#eceef1" strokeWidth="1.500" /></StatusButton>
      <span className="w-px" />
      <StatusButton name="隔离对象"><path d="M1 2H5V6H1ZM7 2H11V5H7Z" /><circle cx="8" cy="9" r="2" /></StatusButton>
      <span className="w-px" />
      <StatusButton name="硬件加速"><path d="M1 2H10V8H1Z" fill="#d7dade" stroke="none" /><path d="M6 11L9 6L12 11Z" fill={GOLD} stroke="none" /></StatusButton>
      <span className="w-px" />
      <StatusButton name="全屏显示"><path d="M1 2H11V10H1ZM6 4H9V7M3 8H5" /></StatusButton>
      <StatusButton name="自定义"><path d="M1 2H11M1 6H11M1 10H11" stroke="#dfe2e6" strokeWidth="1.500" /></StatusButton>
    </div>
  </footer>
);

const App = () => {
  return (
    <div
      lang="zh-CN"
      className="relative flex min-h-screen w-full flex-col overflow-hidden bg-[#222933] font-['Noto_Sans','Noto_Sans_CJK_SC',sans-serif] text-[7px] leading-[10px]"
    >
      <Header />
      <RibbonTabs />
      <Ribbon />
      <FileTabs />
      <div className="flex flex-1">
        <Palette />
        <main className="relative min-w-0 flex-1 bg-[#212830]">
          <Contours />
          <div className="absolute left-[2px] top-[3px] whitespace-nowrap text-[#d3d7dd]">[−][俯视][二维线框]</div>
          <ViewCube />
          <NavBar />
          <CommandLine />
        </main>
      </div>
      <StatusBar />
      <div className="pointer-events-none absolute bottom-[16px] right-[26px] flex items-center whitespace-nowrap font-['Liberation_Sans','Noto_Sans_CJK_SC',sans-serif] text-[21px] font-medium leading-[20px] text-white [text-shadow:1px_1px_1px_#000,-1px_0_1px_#333]">
        <span className="text-[22px]">搜狐号</span>
        <span>@图新地球LSV</span>
      </div>
    </div>
  );
};

export default App;
